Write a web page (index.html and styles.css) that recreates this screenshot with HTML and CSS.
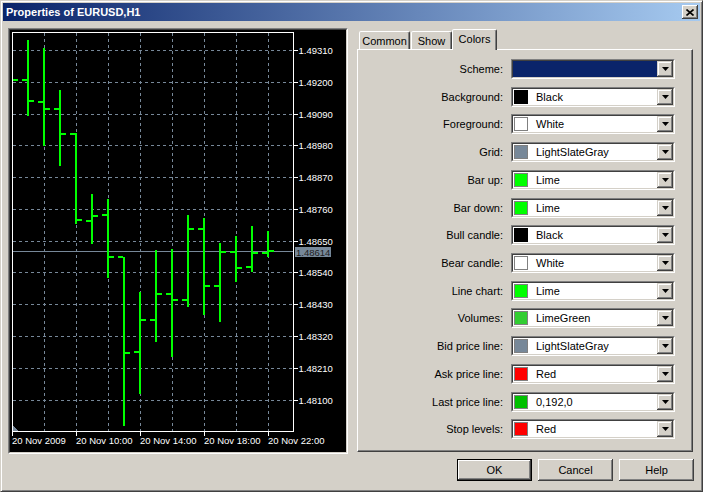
FILE: index.html
```html
<!DOCTYPE html>
<html>
<head>
<meta charset="utf-8">
<title>Properties of EURUSD,H1</title>
<link rel="stylesheet" href="styles.css">
</head>
<body>
<div class="window">
  <div class="titlebar">
    <span class="title">Properties of EURUSD,H1</span>
    <div class="close"><svg width="8" height="7" viewBox="0 0 8 7"><path d="M0.5 0.5L7.5 6.5M7.5 0.5L0.5 6.5" stroke="#000" stroke-width="1.6" fill="none"/></svg></div>
  </div>
  <div class="client">
    <div class="chart-frame">
      <div class="chart-inner">
        <svg class="chart" width="336" height="422" viewBox="10 30 336 422">
          <path class="grid" d="M44.5 33V431M76.5 33V431M108.5 33V431M140.5 33V431M172.5 33V431M204.5 33V431M236.5 33V431M268.5 33V431
            M13 50.5H293M13 82.5H293M13 114.5H293M13 145.5H293M13 177.5H293M13 209.5H293M13 241.5H293M13 272.5H293M13 304.5H293M13 336.5H293M13 368.5H293M13 400.5H293"/>
          <path class="priceline" d="M13 251.5H293"/>
          <polygon class="vol" points="13,426 13,431 18,431"/>
          <path class="bars" d="M28 40V116M22 80H27M29 101H34
            M44 48V146M38 102H43M45 109H50
            M60 90V166M54 109H59M61 134H66
            M76 133V224M70 134H75M77 220H82
            M92 194V244M86 221H91M93 216H98
            M108 199V278M102 215H107M109 257H114
            M124 257V426M118 257H123M125 353H130
            M140 292V394M134 352H139M141 320H146
            M156 250V342M150 320H155M157 294H162
            M172 249V357M166 294H171M173 300H178
            M188 215V307M182 300H187M189 229H194
            M204 218V315M198 229H203M205 286H210
            M220 243V322M214 286H219M221 252H226
            M236 236V282M230 252H235M237 268H242
            M252 226V272M246 267H251M253 253H258
            M268 231V257M262 253H267M269 251H274
            M13 80H18"/>
          <rect class="frame" x="12.5" y="32.5" width="281" height="399"/>
          <path class="ticks" d="M294 50.5H298M294 82.5H298M294 114.5H298M294 145.5H298M294 177.5H298M294 209.5H298M294 241.5H298M294 272.5H298M294 304.5H298M294 336.5H298M294 368.5H298M294 400.5H298
            M12.5 432V436M76.5 432V436M140.5 432V436M204.5 432V436M268.5 432V436"/>
          <g class="axis">
            <text x="298.5" y="54">1.49310</text>
            <text x="298.5" y="86">1.49200</text>
            <text x="298.5" y="118">1.49090</text>
            <text x="298.5" y="149">1.48980</text>
            <text x="298.5" y="181">1.48870</text>
            <text x="298.5" y="213">1.48760</text>
            <text x="298.5" y="245">1.48650</text>
            <text x="298.5" y="276">1.48540</text>
            <text x="298.5" y="308">1.48430</text>
            <text x="298.5" y="340">1.48320</text>
            <text x="298.5" y="372">1.48210</text>
            <text x="298.5" y="404">1.48100</text>
            <text x="12" y="444">20 Nov 2009</text>
            <text x="76" y="444">20 Nov 10:00</text>
            <text x="140" y="444">20 Nov 14:00</text>
            <text x="204" y="444">20 Nov 18:00</text>
            <text x="268" y="444">20 Nov 22:00</text>
          </g>
          <rect class="pricebox" x="295" y="247" width="36" height="10"/>
          <text class="pricetext" x="296" y="255.5">1.48614</text>
        </svg>
      </div>
    </div>
    <div class="props">
      <div class="tabs">
        <div class="tab tab-common">Common</div>
        <div class="tab tab-show">Show</div>
        <div class="tab tab-colors active">Colors</div>
      </div>
      <div class="tabpanel">
        <div class="form">
          <div class="label">Scheme:</div>
          <div class="combo"><div class="combo-in"><div class="scheme-fill"></div><div class="ddbtn"><svg width="7" height="4" viewBox="0 0 7 4"><polygon points="0,0 7,0 3.5,4" fill="#000"/></svg></div></div></div>

          <div class="label">Background:</div>
          <div class="combo"><div class="combo-in"><span class="swatch sw-black"></span><span class="value">Black</span><div class="ddbtn"><svg width="7" height="4" viewBox="0 0 7 4"><polygon points="0,0 7,0 3.5,4" fill="#000"/></svg></div></div></div>

          <div class="label">Foreground:</div>
          <div class="combo"><div class="combo-in"><span class="swatch sw-white"></span><span class="value">White</span><div class="ddbtn"><svg width="7" height="4" viewBox="0 0 7 4"><polygon points="0,0 7,0 3.5,4" fill="#000"/></svg></div></div></div>

          <div class="label">Grid:</div>
          <div class="combo"><div class="combo-in"><span class="swatch sw-slate"></span><span class="value">LightSlateGray</span><div class="ddbtn"><svg width="7" height="4" viewBox="0 0 7 4"><polygon points="0,0 7,0 3.5,4" fill="#000"/></svg></div></div></div>

          <div class="label">Bar up:</div>
          <div class="combo"><div class="combo-in"><span class="swatch sw-lime"></span><span class="value">Lime</span><div class="ddbtn"><svg width="7" height="4" viewBox="0 0 7 4"><polygon points="0,0 7,0 3.5,4" fill="#000"/></svg></div></div></div>

          <div class="label">Bar down:</div>
          <div class="combo"><div class="combo-in"><span class="swatch sw-lime"></span><span class="value">Lime</span><div class="ddbtn"><svg width="7" height="4" viewBox="0 0 7 4"><polygon points="0,0 7,0 3.5,4" fill="#000"/></svg></div></div></div>

          <div class="label">Bull candle:</div>
          <div class="combo"><div class="combo-in"><span class="swatch sw-black"></span><span class="value">Black</span><div class="ddbtn"><svg width="7" height="4" viewBox="0 0 7 4"><polygon points="0,0 7,0 3.5,4" fill="#000"/></svg></div></div></div>

          <div class="label">Bear candle:</div>
          <div class="combo"><div class="combo-in"><span class="swatch sw-white"></span><span class="value">White</span><div class="ddbtn"><svg width="7" height="4" viewBox="0 0 7 4"><polygon points="0,0 7,0 3.5,4" fill="#000"/></svg></div></div></div>

          <div class="label">Line chart:</div>
          <div class="combo"><div class="combo-in"><span class="swatch sw-lime"></span><span class="value">Lime</span><div class="ddbtn"><svg width="7" height="4" viewBox="0 0 7 4"><polygon points="0,0 7,0 3.5,4" fill="#000"/></svg></div></div></div>

          <div class="label">Volumes:</div>
          <div class="combo"><div class="combo-in"><span class="swatch sw-limegreen"></span><span class="value">LimeGreen</span><div class="ddbtn"><svg width="7" height="4" viewBox="0 0 7 4"><polygon points="0,0 7,0 3.5,4" fill="#000"/></svg></div></div></div>

          <div class="label">Bid price line:</div>
          <div class="combo"><div class="combo-in"><span class="swatch sw-slate"></span><span class="value">LightSlateGray</span><div class="ddbtn"><svg width="7" height="4" viewBox="0 0 7 4"><polygon points="0,0 7,0 3.5,4" fill="#000"/></svg></div></div></div>

          <div class="label">Ask price line:</div>
          <div class="combo"><div class="combo-in"><span class="swatch sw-red"></span><span class="value">Red</span><div class="ddbtn"><svg width="7" height="4" viewBox="0 0 7 4"><polygon points="0,0 7,0 3.5,4" fill="#000"/></svg></div></div></div>

          <div class="label">Last price line:</div>
          <div class="combo"><div class="combo-in"><span class="swatch sw-green192"></span><span class="value">0,192,0</span><div class="ddbtn"><svg width="7" height="4" viewBox="0 0 7 4"><polygon points="0,0 7,0 3.5,4" fill="#000"/></svg></div></div></div>

          <div class="label">Stop levels:</div>
          <div class="combo"><div class="combo-in"><span class="swatch sw-red"></span><span class="value">Red</span><div class="ddbtn"><svg width="7" height="4" viewBox="0 0 7 4"><polygon points="0,0 7,0 3.5,4" fill="#000"/></svg></div></div></div>
        </div>
      </div>
    </div>
  </div>
  <div class="buttons">
    <div class="btn btn-default"><span>OK</span></div>
    <div class="btn"><span>Cancel</span></div>
    <div class="btn"><span>Help</span></div>
  </div>
</div>
</body>
</html>
```
FILE: styles.css
```css
* { box-sizing: border-box; }
html, body { margin: 0; padding: 0; }
body {
  background: #d4d0c8;
  font-family: "Liberation Sans", Arial, sans-serif;
  font-size: 11px;
  color: #000;
  width: 703px;
  height: 492px;
  overflow: hidden;
}
.window {
  width: 703px;
  height: 492px;
  border: 1px solid;
  border-color: #d4d0c8 #404040 #404040 #d4d0c8;
  box-shadow: inset 1px 1px #fff, inset -1px -1px #808080;
  padding: 2px;
  display: flex;
  flex-direction: column;
}
.titlebar {
  height: 18px;
  flex: none;
  background: linear-gradient(to right, #0a246a, #a6caf0);
  display: flex;
  align-items: center;
  justify-content: space-between;
  padding: 0 2px 0 3px;
}
.title {
  color: #fff;
  font-weight: bold;
  font-size: 11px;
  line-height: 18px;
}
.close {
  width: 16px;
  height: 14px;
  background: #d4d0c8;
  box-shadow: inset -1px -1px #404040, inset 1px 1px #fff, inset -2px -2px #808080;
  display: flex;
  align-items: center;
  justify-content: center;
}
.close svg { display: block; }

.client {
  display: flex;
  padding: 7px 0 0 5px;
  flex: none;
}
.chart-frame {
  width: 340px;
  height: 426px;
  border: 1px solid;
  border-color: #808080 #fff #fff #808080;
}
.chart-inner {
  width: 338px;
  height: 424px;
  border: 1px solid;
  border-color: #404040 #d4d0c8 #d4d0c8 #404040;
  background: #000;
}
.chart { display: block; shape-rendering: crispEdges; }
.chart .grid { stroke: #778899; stroke-width: 1; stroke-dasharray: 3 3; fill: none; }
.chart .priceline { stroke: #778899; stroke-width: 1; fill: none; }
.chart .vol { fill: #778899; }
.chart .bars { stroke: #00ff00; stroke-width: 2; fill: none; }
.chart .frame { stroke: #fff; stroke-width: 1; fill: none; }
.chart .ticks { stroke: #fff; stroke-width: 1; fill: none; }
.chart .axis text {
  fill: #fff;
  font-family: "Liberation Sans", Arial, sans-serif;
  font-size: 9.5px;
}
.chart .pricebox { fill: #778899; }
.chart .pricetext {
  fill: #1e1e1e;
  font-family: "Liberation Sans", Arial, sans-serif;
  font-size: 9.5px;
}

.props {
  margin-left: 9px;
  margin-top: 1px;
  width: 336px;
}
.tabs {
  height: 20px;
  display: flex;
  align-items: flex-end;
  padding-left: 2px;
}
.tab {
  height: 18px;
  border: 1px solid;
  border-bottom: none;
  border-color: #fff #404040 transparent #fff;
  box-shadow: inset -1px 0 #808080;
  border-radius: 2px 2px 0 0;
  display: flex;
  align-items: center;
  justify-content: center;
  padding-top: 1px;
  background: #d4d0c8;
}
.tab-common { width: 51px; margin-right: 1px; }
.tab-show { width: 41px; }
.tab-colors { width: 45px; }
.tab.active {
  height: 21px;
  margin-bottom: -1px;
  position: relative;
  z-index: 1;
  padding-top: 0;
  padding-bottom: 3px;
}
.tabpanel {
  height: 403px;
  border: 1px solid;
  border-color: #fff #404040 #404040 #fff;
  box-shadow: inset -1px -1px #808080;
  padding-top: 9px;
}
.form {
  display: grid;
  grid-template-columns: 145px 164px;
  grid-auto-rows: 20px;
  column-gap: 8px;
  row-gap: 7.72px;
  align-items: center;
}
.label {
  text-align: right;
  white-space: nowrap;
}
.combo {
  height: 20px;
  border: 1px solid;
  border-color: #808080 #fff #fff #808080;
}
.combo-in {
  height: 18px;
  border: 1px solid;
  border-color: #404040 #d4d0c8 #d4d0c8 #404040;
  background: #fff;
  display: flex;
  align-items: center;
}
.swatch {
  width: 14px;
  height: 14px;
  border: 1px solid #808080;
  margin-left: 1px;
  margin-right: 8px;
  flex: none;
}
.sw-black { background: #000; border-color: #000; }
.sw-white { background: #fff; }
.sw-slate { background: #778899; }
.sw-lime { background: #00ff00; }
.sw-limegreen { background: #32cd32; }
.sw-red { background: #ff0000; }
.sw-green192 { background: #00c000; }
.value { flex: 1; white-space: nowrap; }
.scheme-fill {
  flex: 1;
  height: 16px;
  background: #0a246a;
}
.ddbtn {
  width: 16px;
  height: 16px;
  flex: none;
  background: #d4d0c8;
  box-shadow: inset -1px -1px #404040, inset 1px 1px #d4d0c8, inset -2px -2px #808080, inset 2px 2px #fff;
  display: flex;
  align-items: center;
  justify-content: center;
}
.ddbtn svg { display: block; }

.buttons {
  display: flex;
  justify-content: flex-end;
  gap: 6px;
  padding-right: 6px;
  margin-top: 5px;
}
.btn {
  width: 75px;
  height: 22px;
  background: #d4d0c8;
  box-shadow: inset -1px -1px #404040, inset 1px 1px #fff, inset -2px -2px #808080;
  display: flex;
  align-items: center;
  justify-content: center;
}
.btn-default {
  border: 1px solid #000;
}
```
